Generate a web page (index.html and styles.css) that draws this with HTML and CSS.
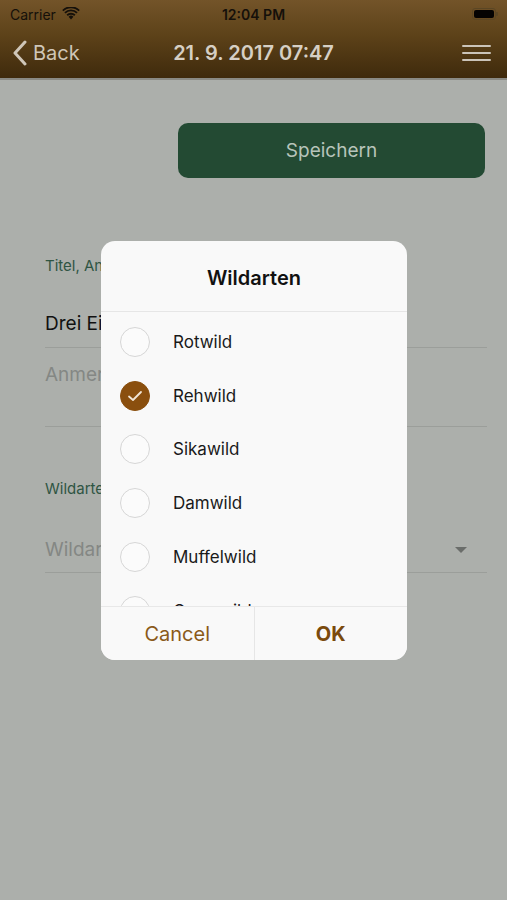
FILE: index.html
```html
<!DOCTYPE html>
<html lang="de">
<head>
<meta charset="utf-8">
<link rel="stylesheet" href="styles.css">
</head>
<body>
<div class="screen">
  <header class="topbar">
    <div class="status">
      <div class="status-left">
        <span>Carrier</span>
        <svg class="wifi" width="18" height="13" viewBox="0 0 18 13">
          <path d="M9 12.5 L6.6 9.8 A3.4 3.4 0 0 1 11.4 9.8 Z" fill="#15100a"/>
          <path d="M4.5 7.6 A6.4 6.4 0 0 1 13.5 7.6 L12.2 9 A4.5 4.5 0 0 0 5.8 9 Z" fill="#15100a"/>
          <path d="M2.3 5.2 A9.6 9.6 0 0 1 15.7 5.2 L14.4 6.6 A7.6 7.6 0 0 0 3.6 6.6 Z" fill="#15100a"/>
          <path d="M0.2 2.9 A12.6 12.6 0 0 1 17.8 2.9 L16.6 4.3 A10.8 10.8 0 0 0 1.4 4.3 Z" fill="#15100a"/>
        </svg>
      </div>
      <div class="status-time">12:04 PM</div>
      <div class="status-right">
        <div class="battery"><div class="battery-fill"></div></div>
        <div class="battery-tip"></div>
      </div>
    </div>
    <nav class="navbar">
      <div class="back">
        <svg width="16" height="26" viewBox="0 0 16 26"><path d="M13 2 L3 13 L13 24" fill="none" stroke="#cfc6b8" stroke-width="3" stroke-linecap="round" stroke-linejoin="round"/></svg>
        <span>Back</span>
      </div>
      <div class="nav-title">21. 9. 2017 07:47</div>
      <div class="menu">
        <span></span><span></span><span></span>
      </div>
    </nav>
  </header>

  <main class="content">
    <div class="save-row">
      <button class="save">Speichern</button>
    </div>
    <div class="field">
      <div class="label">Titel, Anmerkung</div>
      <div class="value">Drei Eichen</div>
    </div>
    <div class="field note">
      <div class="placeholder">Anmerkung</div>
    </div>
    <div class="field">
      <div class="label wild-label">Wildarten</div>
      <div class="select">
        <span class="placeholder">Wildarten</span>
        <span class="caret"></span>
      </div>
    </div>
  </main>

  <div class="dialog">
    <div class="dialog-title">Wildarten</div>
    <div class="options">
      <div class="option"><span class="radio"></span><span>Rotwild</span></div>
      <div class="option"><span class="radio checked"><svg width="16" height="12" viewBox="0 0 16 12"><path d="M2 6.5 L6 10 L14 2" fill="none" stroke="#f2e6d6" stroke-width="1.8" stroke-linecap="round" stroke-linejoin="round"/></svg></span><span>Rehwild</span></div>
      <div class="option"><span class="radio"></span><span>Sikawild</span></div>
      <div class="option"><span class="radio"></span><span>Damwild</span></div>
      <div class="option"><span class="radio"></span><span>Muffelwild</span></div>
      <div class="option"><span class="radio"></span><span>Gamswild</span></div>
    </div>
    <div class="actions">
      <button class="act cancel">Cancel</button>
      <button class="act ok">OK</button>
    </div>
  </div>
</div>
</body>
</html>
```

FILE: styles.css
```css
* { box-sizing: border-box; }
html, body { margin: 0; padding: 0; }
body {
  width: 507px;
  height: 900px;
  overflow: hidden;
  font-family: Inter, "Liberation Sans", sans-serif;
  background: #acafab;
}
.screen {
  position: relative;
  width: 507px;
  height: 900px;
  background: #acafab;
}
.topbar {
  height: 80px;
  background: linear-gradient(180deg, #735429 0%, #5d4219 45%, #3f2a0c 100%);
  border-bottom: 2px solid #8a8a84;
}
.status {
  height: 28px;
  display: flex;
  align-items: center;
  justify-content: space-between;
  padding: 0 9px 0 10px;
  color: #15100a;
  font-size: 14px;
  position: relative;
}
.status-left { display: flex; align-items: center; gap: 6px; }
.wifi { margin-top: -2px; }
.status-time {
  position: absolute;
  left: 0; right: 0;
  text-align: center;
  font-weight: 600;
  font-size: 14px;
  pointer-events: none;
}
.status-right { display: flex; align-items: center; }
.battery {
  width: 24px; height: 12px;
  border: 1px solid #5b4624;
  border-radius: 3px;
  padding: 1px;
}
.battery-fill { width: 100%; height: 100%; background: #050302; border-radius: 2px; }
.battery-tip { width: 2px; height: 4px; background: #5b4624; border-radius: 0 1px 1px 0; }

.navbar {
  height: 50px;
  display: flex;
  align-items: center;
  justify-content: space-between;
  padding: 0 16px 0 12px;
  position: relative;
  color: #d8d0c4;
}
.back { display: flex; align-items: center; gap: 5px; font-size: 20px; color: #cfc6b8; }
.nav-title {
  position: absolute;
  left: 0; right: 0;
  text-align: center;
  font-size: 20px;
  font-weight: 600;
  color: #d6cfc4;
  pointer-events: none;
}
.menu { display: flex; flex-direction: column; gap: 4.5px; width: 29px; }
.menu span { display: block; height: 2.5px; background: #cbc4b9; border-radius: 1px; }

.content { padding: 43px 20px 0 45px; }
.save-row { display: flex; justify-content: flex-end; padding-right: 2px; }
.save {
  width: 307px;
  height: 55px;
  border: none;
  border-radius: 10px;
  background: #234a33;
  color: #b7c4ba;
  font-family: inherit;
  font-size: 19px;
}
.field { border-bottom: 1px solid #9b9e9a; }
.label { color: #2f5543; font-size: 15px; margin-top: 78px; }
.value { color: #111; font-size: 19px; padding: 37px 0 12px; }
.note { height: 79px; padding-top: 15px; }
.placeholder { color: #848784; font-size: 19px; }
.wild-label { margin-top: 52px; }
.select {
  display: flex;
  justify-content: space-between;
  align-items: center;
  padding: 40px 20px 11px 0;
}
.caret {
  width: 0; height: 0;
  border-left: 6px solid transparent;
  border-right: 6px solid transparent;
  border-top: 6px solid #6a6d6a;
}

.dialog {
  position: absolute;
  left: 101px;
  top: 241px;
  width: 306px;
  height: 419px;
  background: #f9f9f9;
  border-radius: 14px;
  overflow: hidden;
  display: flex;
  flex-direction: column;
}
.dialog-title {
  height: 71px;
  padding-top: 3px;
  display: flex;
  align-items: center;
  justify-content: center;
  font-size: 20px;
  font-weight: 600;
  color: #111;
  border-bottom: 1px solid #e6e6e6;
  flex: none;
}
.options { flex: 1; overflow: hidden; padding-top: 3px; }
.option {
  height: 53.8px;
  display: flex;
  align-items: center;
  gap: 23px;
  padding-left: 19px;
  font-size: 17px;
  color: #1a1a1a;
}
.radio {
  width: 30px; height: 30px;
  border-radius: 50%;
  border: 1.5px solid #d6d6d6;
  background: #fbfbfb;
  display: flex;
  align-items: center;
  justify-content: center;
  flex: none;
}
.radio.checked { background: #8a4f0e; border-color: #8a4f0e; }
.actions {
  height: 54px;
  flex: none;
  display: flex;
  border-top: 1px solid #e8e8e8;
  background: #f9f9f9;
}
.act {
  flex: 1;
  border: none;
  background: transparent;
  font-family: inherit;
  font-size: 20px;
  color: #8a5a1a;
}
.cancel { border-right: 1px solid #e6e6e6; }
.ok { font-weight: 700; color: #7a4a0d; }
```
